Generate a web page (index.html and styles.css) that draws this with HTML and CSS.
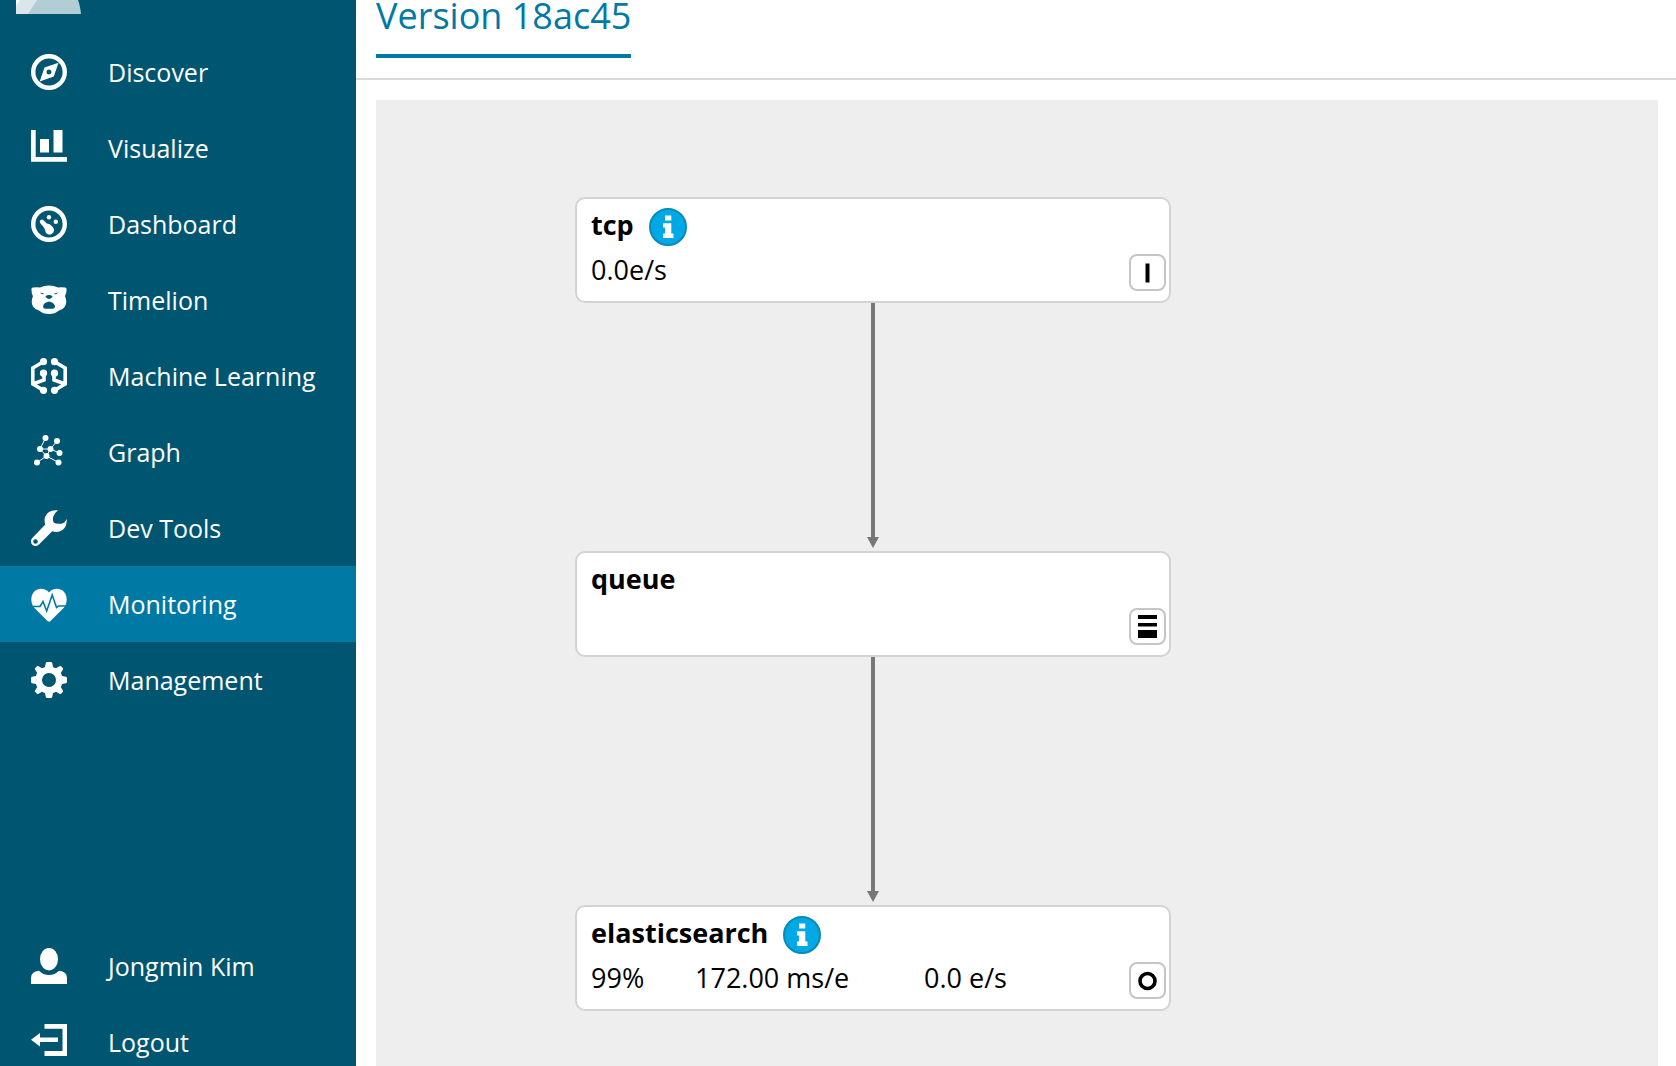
FILE: index.html
```html
<!DOCTYPE html>
<html lang="en">
<head>
<meta charset="utf-8">
<meta name="viewport" content="width=device-width, initial-scale=1">
<title>Monitoring - Pipeline</title>
<link rel="stylesheet" href="styles.css">
</head>
<body>
<div class="app">
  <aside class="sidebar">
    <svg class="logo" viewBox="0 0 66 14" aria-hidden="true">
      <path fill="#b3cdd5" d="M0 0H62Q64 5 65 14H0Z"/>
      <path fill="#dbe6eb" d="M0 0H21L12 14H0Z"/>
      <path fill="#fff" d="M0 0H4L0 6Z"/>
    </svg>
    <nav class="nav" aria-label="Main">
      <a class="nav-link" href="#discover">
        <svg class="icon" viewBox="0 0 36 36" fill="#fff" aria-hidden="true"><circle cx="18" cy="18" r="15.8" fill="none" stroke="#fff" stroke-width="4.4"/><path fill-rule="evenodd" d="M27.500 8.700 22.800 22.500 8.700 27.500 13.500 13.500ZM18 15.500a2.500 2.500 0 1 0 0 5a2.500 2.500 0 0 0 0-5Z"/></svg>
        <span>Discover</span>
      </a>
      <a class="nav-link" href="#visualize">
        <svg class="icon" viewBox="0 0 36 36" fill="#fff" aria-hidden="true"><path d="M0 0H4.700V27H36V31.700H0ZM9 9H18V22.500H9ZM22.500 0H31.500V22.500H22.500Z"/></svg>
        <span>Visualize</span>
      </a>
      <a class="nav-link" href="#dashboard">
        <svg class="icon" viewBox="0 0 36 36" fill="#fff" aria-hidden="true"><circle cx="18" cy="18" r="15.800" fill="none" stroke="#fff" stroke-width="4.400"/><circle cx="18" cy="11.300" r="2.200"/><circle cx="24.800" cy="15.800" r="2.200"/><path d="M9.500 17.500A2.200 2.200 0 0 1 12.500 14.200L15.800 17.600Q19 17.600 21.500 20.800A4.400 4.400 0 1 1 14.200 24.500Q13.500 21.500 9.500 17.500Z"/></svg>
        <span>Dashboard</span>
      </a>
      <a class="nav-link" href="#timelion">
        <svg class="icon" viewBox="0 -3 36 36" fill="#fff" aria-hidden="true"><path fill-rule="evenodd" d="M.5 5Q0 2.700 2 2.500Q6 2 9 2.500Q13 .6 18 .6T27 2.500Q30 2 34 2.500Q36 2.700 35.500 5.500Q35.500 8.500 34 11Q36.500 17 34 21.500Q32 24.500 28 25.500Q24 29 18 29T8 25.500Q4 24.500 2 21.500Q-.5 17 2 11Q.500 9 .5 5ZM9.200 7.500Q10.500 10.300 13.200 8.700ZM26.800 7.500Q25.500 10.300 22.800 8.700ZM14.500 11.300Q14.500 13 18 14Q21.500 13 21.500 11.300Q20 10 18 10T14.500 11.300ZM18 16.500Q12.500 17.500 12 21.500Q12 23.700 14.500 23.700H21.500Q24 23.700 24 21.500Q23.500 17.500 18 16.500Z"/></svg>
        <span>Timelion</span>
      </a>
      <a class="nav-link" href="#ml">
        <svg class="icon" viewBox="0 0 36 36" fill="none" stroke="#fff" stroke-width="3.600" aria-hidden="true"><path d="M12 4 1.800 10V26L12 32M24 4 34.200 10V26L24 32M13 15V22L3 25.500M23 15V22L33 25.500"/><g fill="#fff" stroke="none"><circle cx="12.500" cy="3.700" r="3.600"/><circle cx="23.500" cy="3.700" r="3.600"/><circle cx="12.500" cy="15.200" r="3.600"/><circle cx="23.500" cy="15.200" r="3.600"/><circle cx="12.500" cy="32.300" r="3.600"/><circle cx="23.500" cy="32.300" r="3.600"/></g></svg>
        <span>Machine Learning</span>
      </a>
      <a class="nav-link" href="#graph">
        <svg class="icon" viewBox="0 0 36 36" fill="none" stroke="#fff" aria-hidden="true"><path d="M14.500 4 9 15H19.500L26 7M19.500 15 28.500 19M9 15 15.500 22 6 28.500M19.500 15 15.500 22 27.500 28.500"/><g fill="#fff" stroke="none"><circle cx="14.500" cy="4" r="3"/><circle cx="26" cy="7" r="3"/><circle cx="9" cy="15" r="3"/><circle cx="19.500" cy="15" r="3"/><circle cx="28.500" cy="19" r="3"/><circle cx="15.500" cy="22" r="3"/><circle cx="6" cy="28.500" r="3"/><circle cx="27.500" cy="28.500" r="3"/></g></svg>
        <span>Graph</span>
      </a>
      <a class="nav-link" href="#dev-tools">
        <svg class="icon" viewBox="0 0 36 36" fill="#fff" aria-hidden="true"><path fill-rule="evenodd" d="M27 .3Q17 -.8 14 7Q13 11 14.300 14.500L1.300 28A4.700 4.700 0 0 0 8 34.600L21.200 21.300Q27 23.200 31.500 20Q36.300 16.500 35.700 9Q33 14.300 29 13.800Q24 14 22.700 12.500Q21.500 10 22.300 6.500Q23.500 3 27 .3ZM4.500 29.200a2.300 2.300 0 1 1 0 4.600a2.300 2.300 0 0 1 0-4.600Z"/></svg>
        <span>Dev Tools</span>
      </a>
      <a class="nav-link nav-link-active" href="#monitoring" aria-current="page">
        <svg class="icon" viewBox="0 -1 36 36" fill="#fff" aria-hidden="true"><path d="M18 5.500C22 .5 30 .8 33.500 5.500C36.500 9.500 36.500 16 33 20.500L19.500 34Q18 35.500 16.500 34L3 20.500C-.5 16-.5 9.500 2.500 5.500C6 .8 14 .5 18 5.500Z"/><path fill="none" stroke="#0079a5" stroke-width="1.600" d="M0 19.500H9L12 14.500 15.700 24 21.200 8 25.500 20.500 27.500 19H36"/></svg>
        <span>Monitoring</span>
      </a>
      <a class="nav-link" href="#management">
        <svg class="icon" viewBox="0 0 36 36" fill="#fff" aria-hidden="true"><path fill-rule="evenodd" d="M14.800 1Q15 0 16 0H20Q21 0 21.200 1L22 5Q23.500 5.800 25 6.300L28.300 4.200Q29.300 3.600 30 4.300L31.800 6Q32.500 6.800 31.800 7.700L29.800 11Q30.700 12.500 31 14L35 14.800Q36 15 36 16V20Q36 21 35 21.200L31 22Q30.700 23.500 29.800 25L31.800 28.300Q32.500 29.200 31.800 30L30 31.700Q29.300 32.400 28.300 31.800L25 29.700Q23.500 30.500 22 31L21.200 35Q21 36 20 36H16Q15 36 14.800 35L14 31Q12.500 30.500 11 29.700L7.700 31.800Q6.700 32.400 6 31.700L4.200 30Q3.500 29.200 4.200 28.300L6.200 25Q5.300 23.500 5 22L1 21.200Q0 21 0 20V16Q0 15 1 14.800L5 14Q5.300 12.500 6.200 11L4.200 7.700Q3.500 6.800 4.200 6L6 4.300Q6.700 3.600 7.700 4.200L11 6.300Q12.500 5.800 14 5ZM18 11a7 7 0 1 0 0 14a7 7 0 0 0 0-14Z"/></svg>
        <span>Management</span>
      </a>
    </nav>
    <nav class="nav nav-account" aria-label="Account">
      <a class="nav-link" href="#account">
        <svg class="icon" viewBox="0 0 36 36" fill="#fff" aria-hidden="true"><ellipse cx="18" cy="11.200" rx="9" ry="11.200"/><path d="M0 36V30Q0 23.500 8 22.800Q12 27 18 27T28 22.800Q36 23.500 36 30V36Z"/></svg>
        <span>Jongmin Kim</span>
      </a>
      <a class="nav-link" href="#logout">
        <svg class="icon" viewBox="0 0 36 36" fill="#fff" aria-hidden="true"><path d="M13.500 0H36V32H13.500V27H31.500V4.700H13.500ZM0 15.800 9 9V13.500H27V18H9V22.500Z"/></svg>
        <span>Logout</span>
      </a>
    </nav>
  </aside>
  <main class="main">
    <header class="tabs">
      <a class="tab" href="#version" aria-current="page">Version 18ac45</a>
    </header>
    <section class="canvas" aria-label="Pipeline">
      <article class="node">
        <div class="node-title">
          <h2 class="node-name">tcp</h2>
          <svg class="info" viewBox="0 0 38 38" role="img" aria-label="Information"><circle cx="19" cy="19" r="18" fill="#00a9e5" stroke="#078bb6" stroke-width="2"/><path fill="#fff" d="M16 7.500H22.300V12.500H16ZM14 15.300H22.300V25.500H24.500V30H14V25.500H16V19.500H14Z"/></svg>
        </div>
        <div class="metrics"><span>0.0e/s</span></div>
        <svg class="badge" viewBox="0 0 37 37" role="img" aria-label="Input"><rect x="1" y="1" width="35" height="35" rx="7" fill="#fff" stroke="#c5c5c5" stroke-width="2"/><path d="M16.500 9.500H20.500V28.500H16.500Z"/></svg>
      </article>
      <svg class="connector" viewBox="0 0 12 248" aria-hidden="true"><path fill="#777" d="M4 0H8V234H12L6 245 0 234H4Z"/></svg>
      <article class="node">
        <div class="node-title"><h2 class="node-name">queue</h2></div>
        <svg class="badge" viewBox="0 0 37 37" role="img" aria-label="Queue"><rect x="1" y="1" width="35" height="35" rx="7" fill="#fff" stroke="#c5c5c5" stroke-width="2"/><path d="M9 7H28V11H9ZM9 15H28V18.500H9ZM9 22H28V30H9Z"/></svg>
      </article>
      <svg class="connector" viewBox="0 0 12 248" aria-hidden="true"><path fill="#777" d="M4 0H8V234H12L6 245 0 234H4Z"/></svg>
      <article class="node">
        <div class="node-title">
          <h2 class="node-name">elasticsearch</h2>
          <svg class="info" viewBox="0 0 38 38" role="img" aria-label="Information"><circle cx="19" cy="19" r="18" fill="#00a9e5" stroke="#078bb6" stroke-width="2"/><path fill="#fff" d="M16 7.500H22.300V12.500H16ZM14 15.300H22.300V25.500H24.500V30H14V25.500H16V19.500H14Z"/></svg>
        </div>
        <div class="metrics"><span class="usage">99%</span><span class="latency">172.00 ms/e</span><span>0.0 e/s</span></div>
        <svg class="badge" viewBox="0 0 37 37" role="img" aria-label="Output"><rect x="1" y="1" width="35" height="35" rx="7" fill="#fff" stroke="#c5c5c5" stroke-width="2"/><circle cx="18.500" cy="19" r="7.500" fill="none" stroke="#000" stroke-width="3.600"/></svg>
      </article>
    </section>
  </main>
</div>
</body>
</html>
```
FILE: styles.css
```css
* {
  box-sizing: border-box;
}

body {
  margin: 0;
  background: #fff;
  color: #000;
  font-family: "Open Sans", "Noto Sans", sans-serif;
}

.app {
  display: flex;
  min-height: 100vh;
}

.sidebar {
  position: sticky;
  top: 0;
  display: flex;
  flex-direction: column;
  flex: none;
  width: 356px;
  height: 100vh;
  overflow: hidden;
  background: #005571;
}

.logo {
  flex: none;
  width: 66px;
  height: 14px;
  margin: 0 0 20px 16px;
}

.nav {
  flex: none;
}

.nav-account {
  margin-top: auto;
  margin-bottom: -14px;
}

.nav-link {
  display: flex;
  align-items: center;
  gap: 41px;
  height: 76px;
  padding-left: 31px;
  color: #fff;
  font-size: 25px;
  font-weight: 500;
  line-height: 36px;
  text-decoration: none;
}

.nav-link-active {
  background: #0079a5;
}

.icon {
  flex: none;
  width: 36px;
  height: 36px;
}

.main {
  display: flex;
  flex-direction: column;
  flex: 1;
  min-width: 0;
}

.tabs {
  display: flex;
  height: 80px;
  padding: 0 20px 20px;
  border-bottom: 2px solid #d9d9d9;
}

.tab {
  height: 58px;
  border-bottom: 4px solid #0079a5;
  color: #0079a5;
  font-size: 36px;
  line-height: 32px;
  text-decoration: none;
}

.canvas {
  flex: 1;
  margin: 20px 18px 0 20px;
  padding: 97px 0 54px 199px;
  background: #eee;
}

.node {
  position: relative;
  width: 596px;
  height: 106px;
  padding: 8px 14px;
  border: 2px solid #d3d3d3;
  border-radius: 10px;
  background: #fff;
}

.node-title {
  display: flex;
  align-items: center;
  gap: 15px;
  height: 40px;
}

.node-name {
  margin: 0;
  padding-bottom: 4px;
  font-size: 27px;
  line-height: 36px;
}

.info {
  flex: none;
  width: 38px;
  height: 38px;
}

.metrics {
  display: flex;
  font-size: 27px;
  line-height: 46px;
}

.usage {
  width: 104px;
}

.latency {
  width: 229px;
}

.badge {
  position: absolute;
  right: 3px;
  bottom: 10px;
  width: 37px;
  height: 37px;
}

.connector {
  display: block;
  width: 12px;
  height: 248px;
  margin-left: 292px;
}
```
